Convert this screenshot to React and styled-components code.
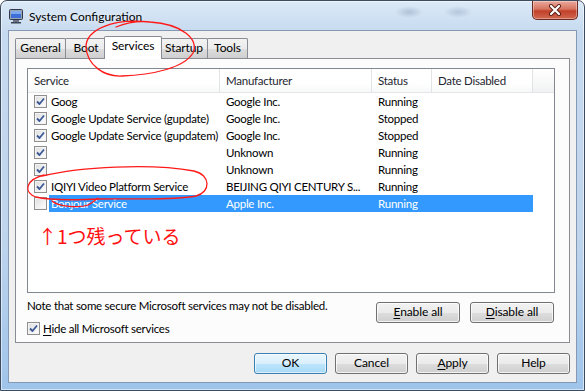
import React from 'react';
import styled, { createGlobalStyle, css } from 'styled-components';

const GlobalStyle = createGlobalStyle`
  html, body { margin: 0; padding: 0; background: #fff; }
  body {
    width: 585px; height: 391px; overflow: hidden;
    font-family: "Segoe UI", Lato, "Liberation Sans", sans-serif;
    font-size: 11.5px; letter-spacing: -0.25px; color: #000;
  }
  * { box-sizing: border-box; }
`;

const Window = styled.div`
  position: relative;
  width: 585px;
  height: 391px;
  border: 1px solid #3d4b5e;
  border-radius: 7px 7px 0 0;
  background:
    radial-gradient(ellipse 14px 6px at 408px 11px, rgba(110,130,160,0.35), transparent),
    radial-gradient(ellipse 14px 6px at 457px 11px, rgba(110,130,160,0.3), transparent),
    linear-gradient(180deg, #dbe9f7 0%, #c6daef 8%, #bfd5ed 60%, #9fc4ea 100%);
  box-shadow: inset 0 0 0 1px rgba(255,255,255,0.55);
  display: flex;
  flex-direction: column;
  overflow: hidden;
`;

const TitleBar = styled.div`
  height: 29px;
  display: flex;
  align-items: center;
  padding-left: 7px;
  gap: 5px;
`;

const TitleText = styled.span`
  font-size: 12px;
  letter-spacing: 0;
  color: #000;
  text-shadow: 0 0 6px rgba(255,255,255,0.9);
  padding-top: 1px;
`;

const CloseButton = styled.div`
  margin-left: auto;
  margin-right: 6px;
  align-self: flex-start;
  width: 46px;
  height: 19px;
  border: 1px solid #6b2a22;
  border-top: none;
  border-radius: 0 0 5px 5px;
  background: linear-gradient(180deg, #e9a99c 0%, #d77560 45%, #c2412a 55%, #d0674e 100%);
  box-shadow: inset 0 0 0 1px rgba(255,255,255,0.35);
  display: flex;
  align-items: center;
  justify-content: center;
`;

const Client = styled.div`
  flex: 1;
  margin: 0 7px 7px 7px;
  border: 1px solid #8599b4;
  background: #f0f0f0;
  display: flex;
  flex-direction: column;
  padding-top: 5px;
`;

const TabStrip = styled.div`
  height: 22px;
  display: flex;
  align-items: flex-end;
  padding-left: 6px;
  position: relative;
  z-index: 2;
`;

const Tab = styled.div`
  width: ${p => p.$w}px;
  height: 20px;
  border: 1px solid #898c95;
  border-bottom: none;
  border-radius: 2px 2px 0 0;
  background: linear-gradient(180deg, #f3f3f3 0%, #ebebeb 50%, #dddddd 51%, #cfcfcf 100%);
  margin-right: -1px;
  display: flex;
  align-items: center;
  justify-content: center;
  font-size: 12px;
  letter-spacing: -0.1px;
  line-height: 1;
  padding-bottom: 1px;
  ${p => p.$active && css`
    height: 23px;
    margin: 0 -2px -1px -2px;
    background: #fff;
    position: relative;
    z-index: 1;
    padding-bottom: 4px;
  `}
`;

const Panel = styled.div`
  height: 285px;
  margin: 0 6px;
  border: 1px solid #898c95;
  background: #fcfcfc;
  padding: 9px 14px 0 11px;
  display: flex;
  flex-direction: column;
`;

const ListBox = styled.div`
  height: 225px;
  border: 1px solid #828790;
  background: #fff;
  overflow: hidden;
`;

const Header = styled.div`
  height: 24px;
  display: grid;
  grid-template-columns: 192px 152px 60px 101px 1fr;
  border-bottom: 1px solid #e5e5e5;
  background: linear-gradient(180deg, #ffffff 0%, #ffffff 60%, #f7f8f9 100%);
`;

const HeaderCell = styled.div`
  display: flex;
  align-items: center;
  padding-left: 6px;
  color: #1e2630;
  border-right: 1px solid #e2e3e5;
  padding-bottom: 1px;
  &:last-child { border-right: none; background: linear-gradient(180deg,#fff,#f1f2f3); }
`;

const Row = styled.div`
  height: 17px;
  display: flex;
  align-items: center;
`;

const CheckCell = styled.div`
  width: 21px;
  padding-left: 6px;
  display: flex;
  align-items: center;
`;

const RowBody = styled.div`
  height: 17px;
  display: grid;
  grid-template-columns: 171px 152px 60px 101px;
  align-items: center;
  background: ${p => (p.$selected ? '#3399ff' : 'transparent')};
  color: ${p => (p.$selected ? '#fff' : '#000')};
`;

const Cell = styled.div`
  padding-left: 6px;
  white-space: nowrap;
  overflow: hidden;
  line-height: 17px;
  &:first-child { padding-left: 2px; }
`;

const Annotation = styled.div`
  margin: 13px 0 0 10px;
  color: #ff1010;
  font-family: "Noto Sans CJK JP", "Noto Sans", sans-serif;
  font-size: 19px;
  letter-spacing: 0;
  line-height: 22px;
`;

const Box = styled.span`
  width: 13px;
  height: 13px;
  border: 1px solid #8f8f8f;
  background: linear-gradient(135deg, #dcdcdc 0%, #f2f2f2 60%, #ffffff 100%);
  box-shadow: inset 0 0 0 1px #f4f4f4;
  display: inline-flex;
  align-items: center;
  justify-content: center;
  flex-shrink: 0;
`;

const Footer = styled.div`
  margin-top: 5px;
  display: flex;
  justify-content: space-between;
  padding-right: 1px;
`;

const FooterLeft = styled.div`
  display: flex;
  flex-direction: column;
  gap: 8px;
`;

const Line = styled.div`
  line-height: 15px;
  display: flex;
  align-items: center;
  gap: 3px;
  white-space: nowrap;
`;

const ButtonGroup = styled.div`
  display: flex;
  gap: 10px;
  padding-top: 4px;
`;

const Button = styled.div`
  width: ${p => p.$w}px;
  height: 21px;
  border: 1px solid ${p => (p.$default ? '#3c7fb1' : '#707070')};
  border-radius: 3px;
  background: ${p => (p.$default
    ? 'linear-gradient(180deg, #eaf6fd 0%, #d9f0fc 50%, #bee6fd 51%, #a7d9f5 100%)'
    : 'linear-gradient(180deg, #f2f2f2 0%, #ebebeb 50%, #dddddd 51%, #cfcfcf 100%)')};
  box-shadow: inset 0 0 0 1px ${p => (p.$default ? 'rgba(255,255,255,0.6)' : 'rgba(255,255,255,0.75)')};
  display: flex;
  align-items: center;
  justify-content: center;
  font-size: 12px;
  letter-spacing: -0.1px;
  line-height: 1;
  padding-bottom: 1px;
`;

const ButtonBar = styled.div`
  display: flex;
  justify-content: flex-end;
  gap: 8px;
  padding: 10px 6px 0 0;
`;

const U = styled.span`
  text-decoration: underline;
  text-underline-offset: 2px;
`;

const Overlay = styled.svg`
  position: absolute;
  left: -1px;
  top: -1px;
  width: 585px;
  height: 391px;
  pointer-events: none;
  z-index: 10;
`;

function Check({ checked }) {
  return (
    <Box>
      {checked && (
        <svg width="9" height="9" viewBox="0 0 9 9">
          <path d="M1 4.5 L3.5 7 L8 1.5" fill="none" stroke="#3a5896" strokeWidth="1.8" strokeLinejoin="round" />
        </svg>
      )}
    </Box>
  );
}

function AppIcon() {
  return (
    <svg width="16" height="16" viewBox="0 0 16 16">
      <rect x="1.5" y="1.5" width="13" height="10" rx="1" fill="#9aa3b0" stroke="#2e3a4c" />
      <rect x="3" y="3" width="10" height="7" fill="#3d6fd6" />
      <rect x="3" y="3" width="10" height="3" fill="#7fa8ee" />
      <rect x="5" y="12" width="6" height="2" fill="#6d7584" />
      <rect x="3" y="14" width="10" height="1.5" fill="#3b4656" />
    </svg>
  );
}

const rows = [
  { c: true, n: 'Goog', m: 'Google Inc.', s: 'Running' },
  { c: true, n: 'Google Update Service (gupdate)', m: 'Google Inc.', s: 'Stopped' },
  { c: true, n: 'Google Update Service (gupdatem)', m: 'Google Inc.', s: 'Stopped' },
  { c: true, n: '', m: 'Unknown', s: 'Running' },
  { c: true, n: '', m: 'Unknown', s: 'Running' },
  { c: true, n: 'IQIYI Video Platform Service', m: 'BEIJING QIYI CENTURY S...', s: 'Running' },
  { c: false, n: 'Bonjour Service', m: 'Apple Inc.', s: 'Running', sel: true },
];

export default function App() {
  return (
    <>
      <GlobalStyle />
      <Window>
        <TitleBar>
          <AppIcon />
          <TitleText>System Configuration</TitleText>
          <CloseButton>
            <svg width="14" height="12" viewBox="0 0 14 12">
              <path d="M3 2 L11 10 M11 2 L3 10" stroke="#5a1d14" strokeWidth="4" strokeLinecap="round" />
              <path d="M3 2 L11 10 M11 2 L3 10" stroke="#fff" strokeWidth="2.2" strokeLinecap="round" />
            </svg>
          </CloseButton>
        </TitleBar>
        <Client>
          <TabStrip>
            <Tab $w={51}>General</Tab>
            <Tab $w={42}>Boot</Tab>
            <Tab $w={58} $active>Services</Tab>
            <Tab $w={48}>Startup</Tab>
            <Tab $w={41}>Tools</Tab>
          </TabStrip>
          <Panel>
            <ListBox>
              <Header>
                <HeaderCell>Service</HeaderCell>
                <HeaderCell>Manufacturer</HeaderCell>
                <HeaderCell>Status</HeaderCell>
                <HeaderCell>Date Disabled</HeaderCell>
                <HeaderCell />
              </Header>
              {rows.map((r, i) => (
                <Row key={i}>
                  <CheckCell><Check checked={r.c} /></CheckCell>
                  <RowBody $selected={r.sel}>
                    <Cell>{r.n}</Cell>
                    <Cell>{r.m}</Cell>
                    <Cell>{r.s}</Cell>
                    <Cell />
                  </RowBody>
                </Row>
              ))}
              <Annotation>↑1つ残っている</Annotation>
            </ListBox>
            <Footer>
              <FooterLeft>
                <Line>Note that some secure Microsoft services may not be disabled.</Line>
                <Line><Check checked /> <span><U>H</U>ide all Microsoft services</span></Line>
              </FooterLeft>
              <ButtonGroup>
                <Button $w={84}><span><U>E</U>nable all</span></Button>
                <Button $w={84}><span><U>D</U>isable all</span></Button>
              </ButtonGroup>
            </Footer>
          </Panel>
          <ButtonBar>
            <Button $w={73} $default>OK</Button>
            <Button $w={73}>Cancel</Button>
            <Button $w={73}><span><U>A</U>pply</span></Button>
            <Button $w={73}>Help</Button>
          </ButtonBar>
        </Client>
        <Overlay viewBox="0 0 585 391">
          <g fill="none" stroke="#ff1a1a" strokeWidth="1.3" strokeLinecap="round">
            <path d="M150,22 C112,18 86,30 86,47 C87,65 104,77 122,76 C152,75 184,68 193,53 C199,39 182,24 150,22 C140,21 126,23 116,27" />
            <path d="M42,176 C80,167 150,163 194,171 C211,175 211,192 196,196 C170,201 130,198 100,199 C78,200 52,201 36,197 C24,193 24,180 44,175" />
            <path d="M52,201 C58,207 80,208 88,205 C92,203 95,200 98,198" />
          </g>
        </Overlay>
      </Window>
    </>
  );
}
